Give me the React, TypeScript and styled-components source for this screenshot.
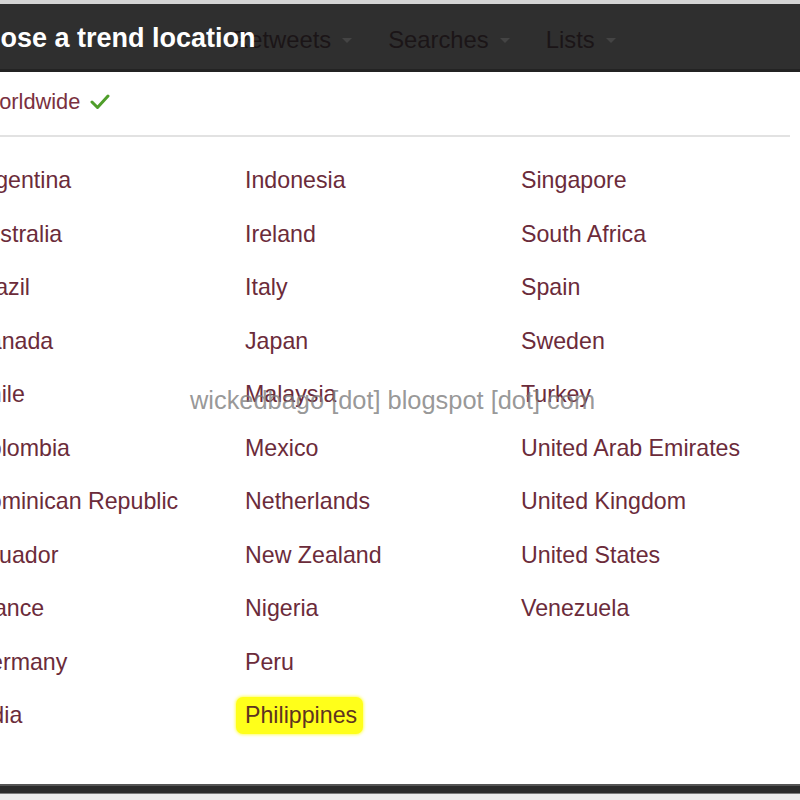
import React from 'react';
import styled, { createGlobalStyle } from 'styled-components';

const GlobalStyle = createGlobalStyle`
  html, body {
    margin: 0;
    padding: 0;
    background: #ffffff;
    overflow: hidden;
  }
  * {
    box-sizing: border-box;
  }
`;

const Page = styled.div`
  position: relative;
  width: 800px;
  height: 800px;
  overflow: hidden;
  display: flex;
  flex-direction: column;
  background: #ffffff;
  font-family: 'Liberation Sans', Arial, sans-serif;
`;

const TopEdge = styled.div`
  height: 4px;
  background: #d4d4d4;
`;

const NavBar = styled.div`
  position: relative;
  height: 68px;
  background: #2f2f2f;
  border-bottom: 3px solid #232323;
  display: flex;
  align-items: center;
  padding-left: 232px;
  padding-top: 6px;
  gap: 36px;
`;

const Tab = styled.div`
  display: flex;
  align-items: center;
  gap: 11px;
  font-size: 23.8px;
  color: #1b1517;
`;

const Caret = styled.span`
  width: 0;
  height: 0;
  border-left: 5px solid transparent;
  border-right: 5px solid transparent;
  border-top: 5px solid #444444;
  margin-top: 2px;
`;

const Title = styled.h2`
  position: absolute;
  left: -52px;
  top: 50%;
  margin: 0;
  transform: translateY(-45%);
  font-size: 27px;
  font-weight: bold;
  color: #ffffff;
  white-space: nowrap;
`;

const WorldwideRow = styled.div`
  height: 63px;
  display: flex;
  align-items: center;
  gap: 10px;
  margin-left: -21px;
  padding-bottom: 4px;
  font-size: 21.8px;
  color: #7a3040;
`;

const Divider = styled.div`
  height: 2px;
  margin-right: 10px;
  background: #e2e2e2;
`;

const Grid = styled.div`
  display: grid;
  grid-template-columns: 273px 276px 1fr;
  grid-template-rows: repeat(11, 53.5px);
  grid-auto-flow: column;
  margin-left: -28px;
  padding-top: 17px;
`;

const Country = styled.div<{ highlight?: boolean }>`
  display: flex;
  align-items: center;
  font-size: 23.2px;
  color: ${({ highlight }) => (highlight ? '#5e3320' : '#6b2b3a')};
`;

const Mark = styled.span`
  background: #ffff1a;
  padding: 5px 6px 5px 9px;
  margin-left: -9px;
  border-radius: 7px;
  box-shadow: 0 0 3px 1px rgba(255, 255, 40, 0.7);
`;

const Spacer = styled.div`
  flex: 1;
`;

const BottomBar = styled.div`
  height: 10px;
  background: #2b2b2b;
  border-top: 2px solid #555555;
  border-bottom: 1px solid #7a7a7a;
`;

const BottomEdge = styled.div`
  height: 6px;
  background: #ececec;
`;

const Watermark = styled.div`
  position: absolute;
  left: 190px;
  top: 386px;
  font-size: 25.4px;
  color: rgba(125, 125, 125, 0.8);
  white-space: nowrap;
  pointer-events: none;
`;

const countries = [
  'Argentina', 'Australia', 'Brazil', 'Canada', 'Chile', 'Colombia',
  'Dominican Republic', 'Ecuador', 'France', 'Germany', 'India',
  'Indonesia', 'Ireland', 'Italy', 'Japan', 'Malaysia', 'Mexico',
  'Netherlands', 'New Zealand', 'Nigeria', 'Peru', 'Philippines',
  'Singapore', 'South Africa', 'Spain', 'Sweden', 'Turkey',
  'United Arab Emirates', 'United Kingdom', 'United States', 'Venezuela',
];

const tabs = ['Retweets', 'Searches', 'Lists'];

const Check = () => (
  <svg width="20" height="18" viewBox="0 0 20 18">
    <polyline
      points="2,9 7.5,14.5 18,3"
      fill="none"
      stroke="#4f9e2a"
      strokeWidth="3"
      strokeLinecap="round"
      strokeLinejoin="round"
    />
  </svg>
);

const App: React.FC = () => (
  <Page>
    <GlobalStyle />
    <TopEdge />
    <NavBar>
      {tabs.map((t) => (
        <Tab key={t}>
          {t}
          <Caret />
        </Tab>
      ))}
      <Title>Choose a trend location</Title>
    </NavBar>
    <WorldwideRow>
      Worldwide <Check />
    </WorldwideRow>
    <Divider />
    <Grid>
      {countries.map((c) =>
        c === 'Philippines' ? (
          <Country key={c} highlight>
            <Mark>{c}</Mark>
          </Country>
        ) : (
          <Country key={c}>{c}</Country>
        )
      )}
    </Grid>
    <Spacer />
    <BottomBar />
    <BottomEdge />
    <Watermark>wickedbago [dot] blogspot [dot] com</Watermark>
  </Page>
);

export default App;
